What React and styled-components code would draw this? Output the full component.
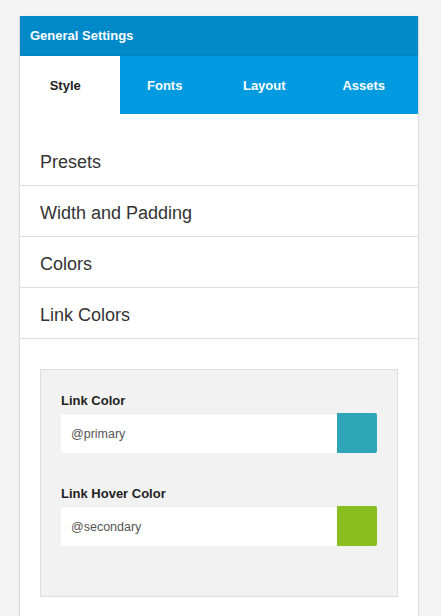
import React from "react";
import styled, { createGlobalStyle } from "styled-components";

const Global = createGlobalStyle`
  html, body { margin: 0; padding: 0; background: #f3f3f3; }
  body { font-family: "Liberation Sans", Arial, Helvetica, sans-serif; }
  * { box-sizing: border-box; }
`;

const Page = styled.div`
  padding: 16px 22px 0 19px;
  height: 616px;
  overflow: hidden;
`;

const Panel = styled.div`
  width: 400px;
  background: #fff;
  border: 1px solid #dcdcdc;
  border-top: none;
  min-height: 640px;
  box-shadow: 0 0 2px rgba(0,0,0,0.06);
`;

const Header = styled.div`
  height: 40px;
  background: #0089c9;
  color: #fff;
  font-size: 13px;
  font-weight: bold;
  display: flex;
  align-items: center;
  padding-left: 10px;
  border-bottom: 1px solid #0082bf;
`;

const Tabs = styled.div`
  display: grid;
  grid-template-columns: repeat(4, 1fr);
  height: 58px;
  background: #009ae0;
`;

const Tab = styled.div`
  display: flex;
  align-items: center;
  justify-content: center;
  padding-right: 9px;
  font-size: 13px;
  font-weight: bold;
  color: ${p => (p.$active ? "#222" : "#fff")};
  background: ${p => (p.$active ? "#fff" : "transparent")};
`;

const List = styled.div`
  padding-top: 21px;
`;

const Row = styled.div`
  height: 51px;
  display: flex;
  align-items: center;
  padding: 4px 0 0 20px;
  font-size: 18px;
  color: #333;
  border-bottom: 1px solid #dddddd;
`;

const Box = styled.div`
  margin: 30px 20px 0 20px;
  background: #f2f2f2;
  border: 1px solid #dddddd;
  padding: 22px 20px 18px 20px;
`;

const Field = styled.div`
  margin-bottom: 32px;
`;

const Label = styled.div`
  font-size: 13px;
  font-weight: bold;
  color: #222;
  line-height: 18px;
  margin-bottom: 3px;
`;

const InputRow = styled.div`
  display: flex;
  height: 40px;
  background: #fff;
  border-top: 1px solid #ececec;
  border-radius: 2px;
`;

const Input = styled.div`
  flex: 1;
  display: flex;
  align-items: center;
  padding-left: 10px;
  font-size: 12.5px;
  color: #555;
`;

const Swatch = styled.div`
  width: 40px;
  margin-top: -1px;
  background: ${p => p.$color};
  border-radius: 0 2px 2px 0;
`;

export default function App() {
  const rows = ["Presets", "Width and Padding", "Colors", "Link Colors"];
  const fields = [
    { label: "Link Color", value: "@primary", color: "#2ea6b7" },
    { label: "Link Hover Color", value: "@secondary", color: "#88bf1e" },
  ];
  return (
    <>
      <Global />
      <Page>
        <Panel>
          <Header>General Settings</Header>
          <Tabs>
            <Tab $active>Style</Tab>
            <Tab>Fonts</Tab>
            <Tab>Layout</Tab>
            <Tab>Assets</Tab>
          </Tabs>
          <List>
            {rows.map(r => (
              <Row key={r}>{r}</Row>
            ))}
          </List>
          <Box>
            {fields.map(f => (
              <Field key={f.label}>
                <Label>{f.label}</Label>
                <InputRow>
                  <Input>{f.value}</Input>
                  <Swatch $color={f.color} />
                </InputRow>
              </Field>
            ))}
          </Box>
        </Panel>
      </Page>
    </>
  );
}
